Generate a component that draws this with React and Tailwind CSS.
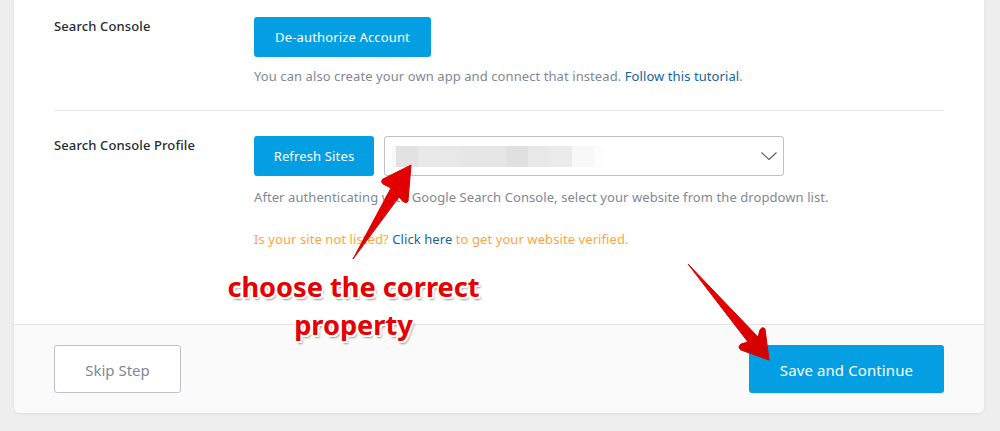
const blurCells = [
  { w: "w-[4px]", color: "#f8f8f8" },
  { w: "w-[22px]", color: "#e2e2e2" },
  { w: "w-[22px]", color: "#e9e9e9" },
  { w: "w-[22px]", color: "#e8e8e8" },
  { w: "w-[22px]", color: "#e6e6e6" },
  { w: "w-[22px]", color: "#e6e6e6" },
  { w: "w-[22px]", color: "#e0e0e0" },
  { w: "w-[22px]", color: "#e8e8e8" },
  { w: "w-[22px]", color: "#ebebeb" },
  { w: "w-[22px]", color: "#f8f8f8" },
  { w: "w-[10px]", color: "#fdfdfd" },
];

function Blur() {
  return (
    <div className="ml-[7px] flex h-[21px]">
      {blurCells.map((cell, i) => (
        <div key={i} className={`h-full ${cell.w}`} style={{ backgroundColor: cell.color }} />
      ))}
    </div>
  );
}

export default function App() {
  return (
    <div className="relative h-[431px] overflow-hidden bg-[#eeeeee] pl-[14px] pr-4 font-['Noto_Sans',sans-serif]">
      <div className="flex h-[413px] flex-col rounded-b-md bg-white shadow-[0_1px_3px_rgba(0,0,0,0.08)]">
        <div className="flex-1 px-10">
          {/* Search Console */}
          <div className="flex border-b border-[#e9e9e9] pb-[25px] pt-[17px]">
            <div className="w-[200px] text-[13px] font-medium leading-[18px] tracking-[0.12px] text-[#242b33]">Search Console</div>
            <div>
              <button className="h-10 w-[177px] rounded-[3px] bg-[#049fe3] pt-px text-[13px] tracking-[0.15px] text-white">De-authorize Account</button>
              <p className="mt-[10px] text-[13px] leading-[18px] tracking-[0.08px] text-[#7f8896]">
                You can also create your own app and connect that instead.{" "}
                <a className="text-[#10669c]">Follow this tutorial</a>.
              </p>
            </div>
          </div>

          {/* Search Console Profile */}
          <div className="flex pt-[25px]">
            <div className="w-[200px] text-[13px] font-medium leading-[18px] tracking-[0.12px] text-[#242b33]">Search Console Profile</div>
            <div>
              <div className="flex gap-[10px]">
                <button className="h-10 w-[120px] rounded-[3px] bg-[#049fe3] pt-px text-[13px] tracking-[0.15px] text-white">Refresh Sites</button>
                <div className="flex h-10 w-[400px] items-center justify-between rounded-[3px] border border-[#bfc1c9] bg-white pr-[6px]">
                  <Blur />
                  <svg width="16" height="8" viewBox="0 0 16 8" fill="none" stroke="#5c6470" strokeWidth="1.2">
                    <path d="M0.5 0.5 L8 7.5 L15.5 0.5" />
                  </svg>
                </div>
              </div>
              <p className="mt-3 text-[13px] leading-[18px] tracking-[0.08px] text-[#7f8896]">
                After authenticating with Google Search Console, select your website from the dropdown list.
              </p>
              <p className="mt-6 text-[13px] leading-[18px] tracking-[0.08px] text-[#ffa53b]">
                Is your site not listed? <a className="text-[#10669c]">Click here</a> to get your website verified.
              </p>
            </div>
          </div>
        </div>

        {/* Footer */}
        <div className="flex h-[89px] items-center justify-between rounded-b-md border-t border-[#e2e2e2] bg-[#fafafa] px-10">
          <button className="h-12 w-[127px] rounded-[3px] border border-[#bfc1c9] bg-white pt-[2px] text-[15px] text-[#7f8896]">Skip Step</button>
          <button className="h-12 w-[195px] rounded-[3px] bg-[#049fe3] pt-[2px] text-[15px] tracking-[0.1px] text-white">Save and Continue</button>
        </div>
      </div>

      {/* Annotation arrows */}
      <svg className="pointer-events-none absolute left-0 top-0" width="1000" height="431" viewBox="0 0 1000 431">
        <defs>
          <linearGradient id="arrowRed" x1="0" y1="0" x2="1" y2="1">
            <stop offset="0" stopColor="#f40000" />
            <stop offset="1" stopColor="#d00000" />
          </linearGradient>
        </defs>
        <path
          d="M353 259 L391 188 L383 184 Q380 181 383 179 L411 165 L408 201 Q407 204 404 202 L399 197 Z"
          fill="url(#arrowRed)"
          stroke="#e00000"
          strokeLinejoin="round"
        />
        <path
          d="M688 264 L758 337 L760 330 Q762 326 765 329 L769 360 L741 350 Q737 347 741 344 L748 342 Z"
          fill="url(#arrowRed)"
          stroke="#d80000"
          strokeLinejoin="round"
        />
      </svg>

      {/* Annotation label */}
      <div className="absolute left-[203px] top-[268px] w-[301px] text-center text-[27.2px] font-bold leading-[38px] text-[#e60000] [text-shadow:1.5px_1.5px_0_#fff,-1.5px_-1.5px_0_#fff,1.5px_-1.5px_0_#fff,-1.5px_1.5px_0_#fff,0_2px_0_#fff,2px_0_0_#fff,-2px_0_0_#fff,0_-2px_0_#fff,2px_3px_2px_#999]">
        choose the correct
        <br />
        property
      </div>
    </div>
  );
}
